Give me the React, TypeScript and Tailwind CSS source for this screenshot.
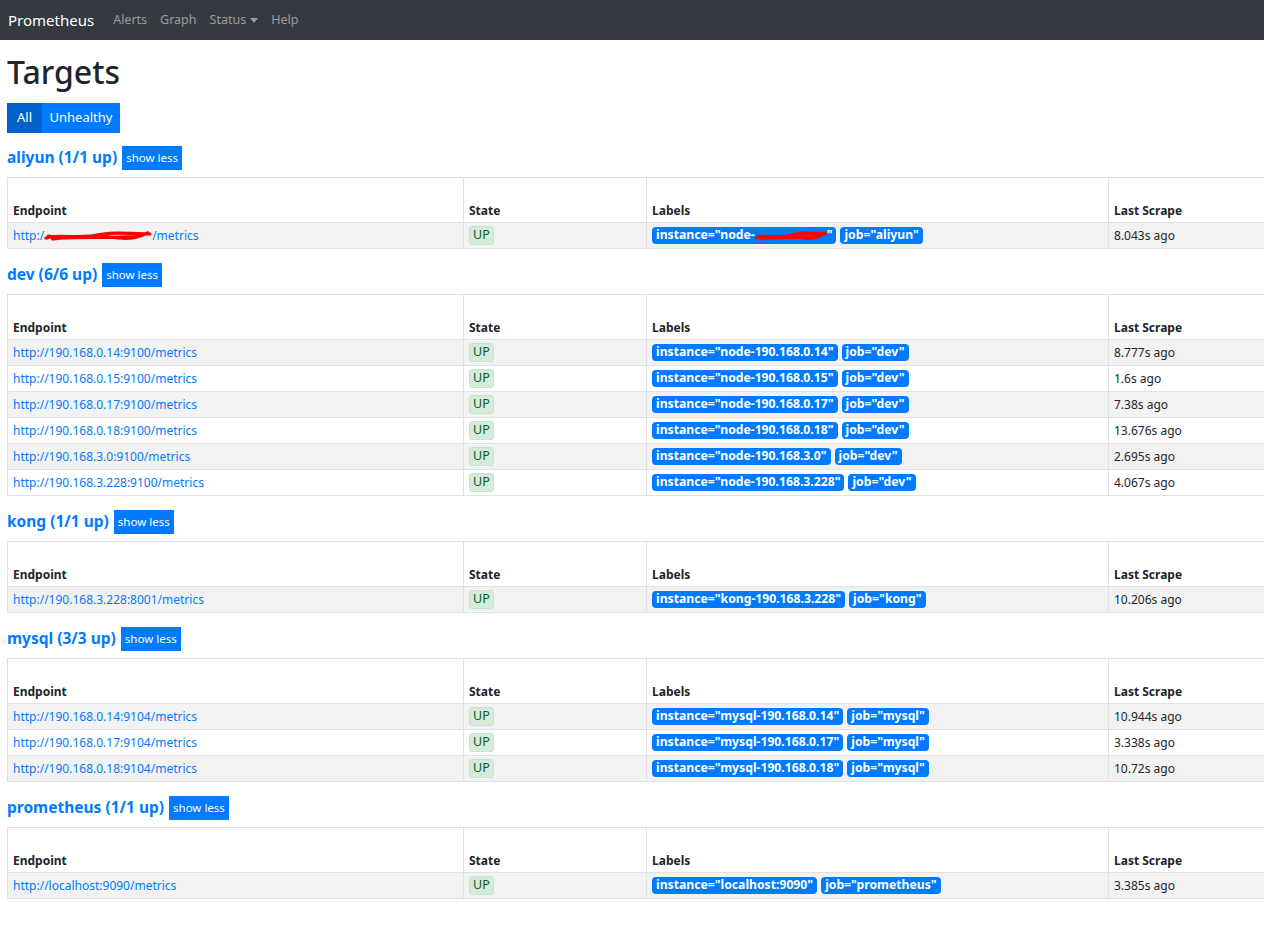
import React from "react";

interface Target {
  endpoint: string;
  instance: string;
  job: string;
  lastScrape: string;
  hidden?: boolean;
}

interface Job {
  name: string;
  up: string;
  targets: Target[];
}

const jobs: Job[] = [
  {
    name: "aliyun",
    up: "1/1 up",
    targets: [
      { endpoint: "", instance: "", job: "aliyun", lastScrape: "8.043s ago", hidden: true },
    ],
  },
  {
    name: "dev",
    up: "6/6 up",
    targets: [
      { endpoint: "http://190.168.0.14:9100/metrics", instance: "node-190.168.0.14", job: "dev", lastScrape: "8.777s ago" },
      { endpoint: "http://190.168.0.15:9100/metrics", instance: "node-190.168.0.15", job: "dev", lastScrape: "1.6s ago" },
      { endpoint: "http://190.168.0.17:9100/metrics", instance: "node-190.168.0.17", job: "dev", lastScrape: "7.38s ago" },
      { endpoint: "http://190.168.0.18:9100/metrics", instance: "node-190.168.0.18", job: "dev", lastScrape: "13.676s ago" },
      { endpoint: "http://190.168.3.0:9100/metrics", instance: "node-190.168.3.0", job: "dev", lastScrape: "2.695s ago" },
      { endpoint: "http://190.168.3.228:9100/metrics", instance: "node-190.168.3.228", job: "dev", lastScrape: "4.067s ago" },
    ],
  },
  {
    name: "kong",
    up: "1/1 up",
    targets: [
      { endpoint: "http://190.168.3.228:8001/metrics", instance: "kong-190.168.3.228", job: "kong", lastScrape: "10.206s ago" },
    ],
  },
  {
    name: "mysql",
    up: "3/3 up",
    targets: [
      { endpoint: "http://190.168.0.14:9104/metrics", instance: "mysql-190.168.0.14", job: "mysql", lastScrape: "10.944s ago" },
      { endpoint: "http://190.168.0.17:9104/metrics", instance: "mysql-190.168.0.17", job: "mysql", lastScrape: "3.338s ago" },
      { endpoint: "http://190.168.0.18:9104/metrics", instance: "mysql-190.168.0.18", job: "mysql", lastScrape: "10.72s ago" },
    ],
  },
  {
    name: "prometheus",
    up: "1/1 up",
    targets: [
      { endpoint: "http://localhost:9090/metrics", instance: "localhost:9090", job: "prometheus", lastScrape: "3.385s ago" },
    ],
  },
];

// red marker scribble used to hide the address in the screenshot
const Scribble = ({ width }: { width: number }) => (
  <svg width={width} height="12" viewBox="0 0 100 12" preserveAspectRatio="none" className="inline-block align-middle">
    <path
      d="M2 8 C 15 3, 30 10, 45 6 S 75 3, 98 4 M4 6 C 20 9, 40 4, 60 7 S 85 8, 96 3 M8 9 C 30 6, 55 9, 90 6"
      fill="none"
      stroke="#ff0000"
      strokeWidth="3.2"
      strokeLinecap="round"
    />
  </svg>
);

const Navbar = () => (
  <nav className="flex h-10 items-center bg-[#343a40] pl-2">
    <span className="mr-[19px] text-[15px] text-white">Prometheus</span>
    <div className="flex items-center gap-[13px] text-[12.5px] text-[#9a9da0]">
      <span>Alerts</span>
      <span>Graph</span>
      <span className="flex items-center gap-1">
        Status
        <span className="mt-[1px] h-0 w-0 border-x-[4px] border-t-[5px] border-x-transparent border-t-[#9a9da0]" />
      </span>
      <span>Help</span>
    </div>
  </nav>
);

const JobSection = ({ job, first }: { job: Job; first: boolean }) => (
  <div className={first ? "mt-[13px]" : "mt-[14px]"}>
    <div className="flex items-center">
      <a className="text-[15.5px] font-bold text-[#007bff]">
        {job.name} ({job.up})
      </a>
      <button className="ml-[5px] h-6 bg-[#007bff] px-[4px] text-[11.5px] text-white">
        show less
      </button>
    </div>
    <table className="mt-[7px] w-[1400px] table-fixed border-collapse text-[12px] text-[#212529]">
      <colgroup>
        <col className="w-[456px]" />
        <col className="w-[183px]" />
        <col className="w-[462px]" />
        <col />
      </colgroup>
      <thead>
        <tr className="h-[45px]">
          <th className="border border-[#dee2e6] px-[5px] pb-[2px] text-left align-bottom font-bold">Endpoint</th>
          <th className="border border-[#dee2e6] px-[5px] pb-[2px] text-left align-bottom font-bold">State</th>
          <th className="border border-[#dee2e6] px-[5px] pb-[2px] text-left align-bottom font-bold">Labels</th>
          <th className="border border-[#dee2e6] px-[5px] pb-[2px] text-left align-bottom font-bold">Last Scrape</th>
        </tr>
      </thead>
      <tbody>
        {job.targets.map((t, i) => (
          <tr key={t.lastScrape} className={i % 2 === 0 ? "h-[26px] bg-[#f2f2f2]" : "h-[26px] bg-white"}>
            <td className="border border-[#dee2e6] px-[5px] text-[#007bff]">
              {t.hidden ? (
                <>
                  http:/<Scribble width={108} />/metrics
                </>
              ) : (
                t.endpoint
              )}
            </td>
            <td className="border border-[#dee2e6] px-[5px]">
              <span className="inline-flex h-[19px] items-center rounded-[3px] border border-[#c3e6cb] bg-[#d4edda] px-[3px] text-[12.5px] text-[#155724]">
                UP
              </span>
            </td>
            <td className="border border-[#dee2e6] px-[5px]">
              <div className="flex gap-[4px]">
                <span className="inline-flex h-[17px] items-center rounded-[4px] bg-[#007bff] px-[4px] text-[12.2px] font-bold text-white">
                  {t.hidden ? (
                    <>
                      instance="node-<Scribble width={72} />"
                    </>
                  ) : (
                    <>instance="{t.instance}"</>
                  )}
                </span>
                <span className="inline-flex h-[17px] items-center rounded-[4px] bg-[#007bff] px-[4px] text-[12.2px] font-bold text-white">
                  job="{t.job}"
                </span>
              </div>
            </td>
            <td className="border border-[#dee2e6] px-[5px]">{t.lastScrape}</td>
          </tr>
        ))}
      </tbody>
    </table>
  </div>
);

export default function App() {
  return (
    <div className="min-h-[940px] w-[1264px] overflow-x-hidden bg-white font-['Noto_Sans',sans-serif]">
      <Navbar />
      <div className="pl-[7px]">
        <h1 className="mt-[12px] text-[32px] leading-[40px] font-medium text-[#212529]">Targets</h1>
        <div className="mt-[11px] flex h-[30px] text-[13px] text-white">
          <button className="w-[35px] bg-[#0062cc]">All</button>
          <button className="w-[78px] bg-[#007bff]">Unhealthy</button>
        </div>
        {jobs.map((job, i) => (
          <JobSection key={job.name} job={job} first={i === 0} />
        ))}
      </div>
    </div>
  );
}
